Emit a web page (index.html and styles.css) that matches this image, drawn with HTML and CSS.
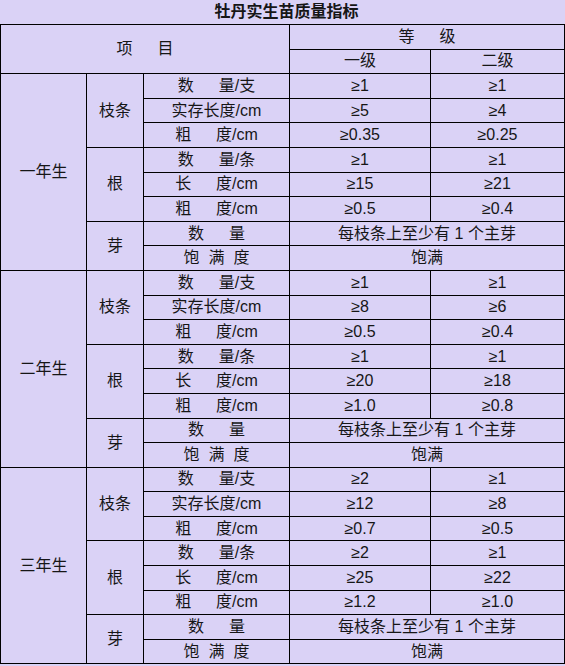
FILE: index.html
```html
<!DOCTYPE html>
<html lang="zh">
<head>
<meta charset="utf-8">
<title>牡丹实生苗质量指标</title>
<link rel="stylesheet" href="styles.css">
</head>
<body>
<div class="title">牡丹实生苗质量指标</div>
<table class="grid">
<colgroup><col class="c1"><col class="c2"><col class="c3"><col class="c4"><col class="c5"></colgroup>
<tr><td colspan="3" rowspan="2">项　  目</td><td colspan="2">等　  级</td></tr>
<tr><td>一级</td><td>二级</td></tr>

<tr><td rowspan="8">一年生</td><td rowspan="3">枝条</td><td>数　  量/支</td><td>≥1</td><td>≥1</td></tr>
<tr><td>实存长度/cm</td><td>≥5</td><td>≥4</td></tr>
<tr><td>粗　  度/cm</td><td>≥0.35</td><td>≥0.25</td></tr>
<tr><td rowspan="3">根</td><td>数　  量/条</td><td>≥1</td><td>≥1</td></tr>
<tr><td>长　  度/cm</td><td>≥15</td><td>≥21</td></tr>
<tr><td>粗　  度/cm</td><td>≥0.5</td><td>≥0.4</td></tr>
<tr><td rowspan="2">芽</td><td>数　  量</td><td colspan="2">每枝条上至少有 1 个主芽</td></tr>
<tr><td>饱  满  度</td><td colspan="2">饱满</td></tr>

<tr><td rowspan="8">二年生</td><td rowspan="3">枝条</td><td>数　  量/支</td><td>≥1</td><td>≥1</td></tr>
<tr><td>实存长度/cm</td><td>≥8</td><td>≥6</td></tr>
<tr><td>粗　  度/cm</td><td>≥0.5</td><td>≥0.4</td></tr>
<tr><td rowspan="3">根</td><td>数　  量/条</td><td>≥1</td><td>≥1</td></tr>
<tr><td>长　  度/cm</td><td>≥20</td><td>≥18</td></tr>
<tr><td>粗　  度/cm</td><td>≥1.0</td><td>≥0.8</td></tr>
<tr><td rowspan="2">芽</td><td>数　  量</td><td colspan="2">每枝条上至少有 1 个主芽</td></tr>
<tr><td>饱  满  度</td><td colspan="2">饱满</td></tr>

<tr><td rowspan="8">三年生</td><td rowspan="3">枝条</td><td>数　  量/支</td><td>≥2</td><td>≥1</td></tr>
<tr><td>实存长度/cm</td><td>≥12</td><td>≥8</td></tr>
<tr><td>粗　  度/cm</td><td>≥0.7</td><td>≥0.5</td></tr>
<tr><td rowspan="3">根</td><td>数　  量/条</td><td>≥2</td><td>≥1</td></tr>
<tr><td>长　  度/cm</td><td>≥25</td><td>≥22</td></tr>
<tr><td>粗　  度/cm</td><td>≥1.2</td><td>≥1.0</td></tr>
<tr><td rowspan="2">芽</td><td>数　  量</td><td colspan="2">每枝条上至少有 1 个主芽</td></tr>
<tr><td>饱  满  度</td><td colspan="2">饱满</td></tr>
</table>
</body>
</html>
```
FILE: styles.css
```css
html, body {
  margin: 0;
  padding: 0;
  background: #dad2f6;
}
body {
  font-family: "Liberation Sans", "Noto Sans CJK SC", sans-serif;
  font-size: 16px;
  color: #161616;
}
.title {
  height: 24px;
  line-height: 24px;
  text-align: center;
  font-weight: bold;
  padding-left: 8px;
}
.grid {
  border-collapse: collapse;
  table-layout: fixed;
  width: 564px;
}
.c1 { width: 86px; }
.c2 { width: 57px; }
.c3 { width: 146px; }
.c4 { width: 141px; }
.c5 { width: 134px; }
.grid tr {
  height: 24.6px;
}
.grid td {
  border: 1px solid #000;
  padding: 0;
  text-align: center;
  vertical-align: middle;
  white-space: pre;
  line-height: 18px;
}
```
